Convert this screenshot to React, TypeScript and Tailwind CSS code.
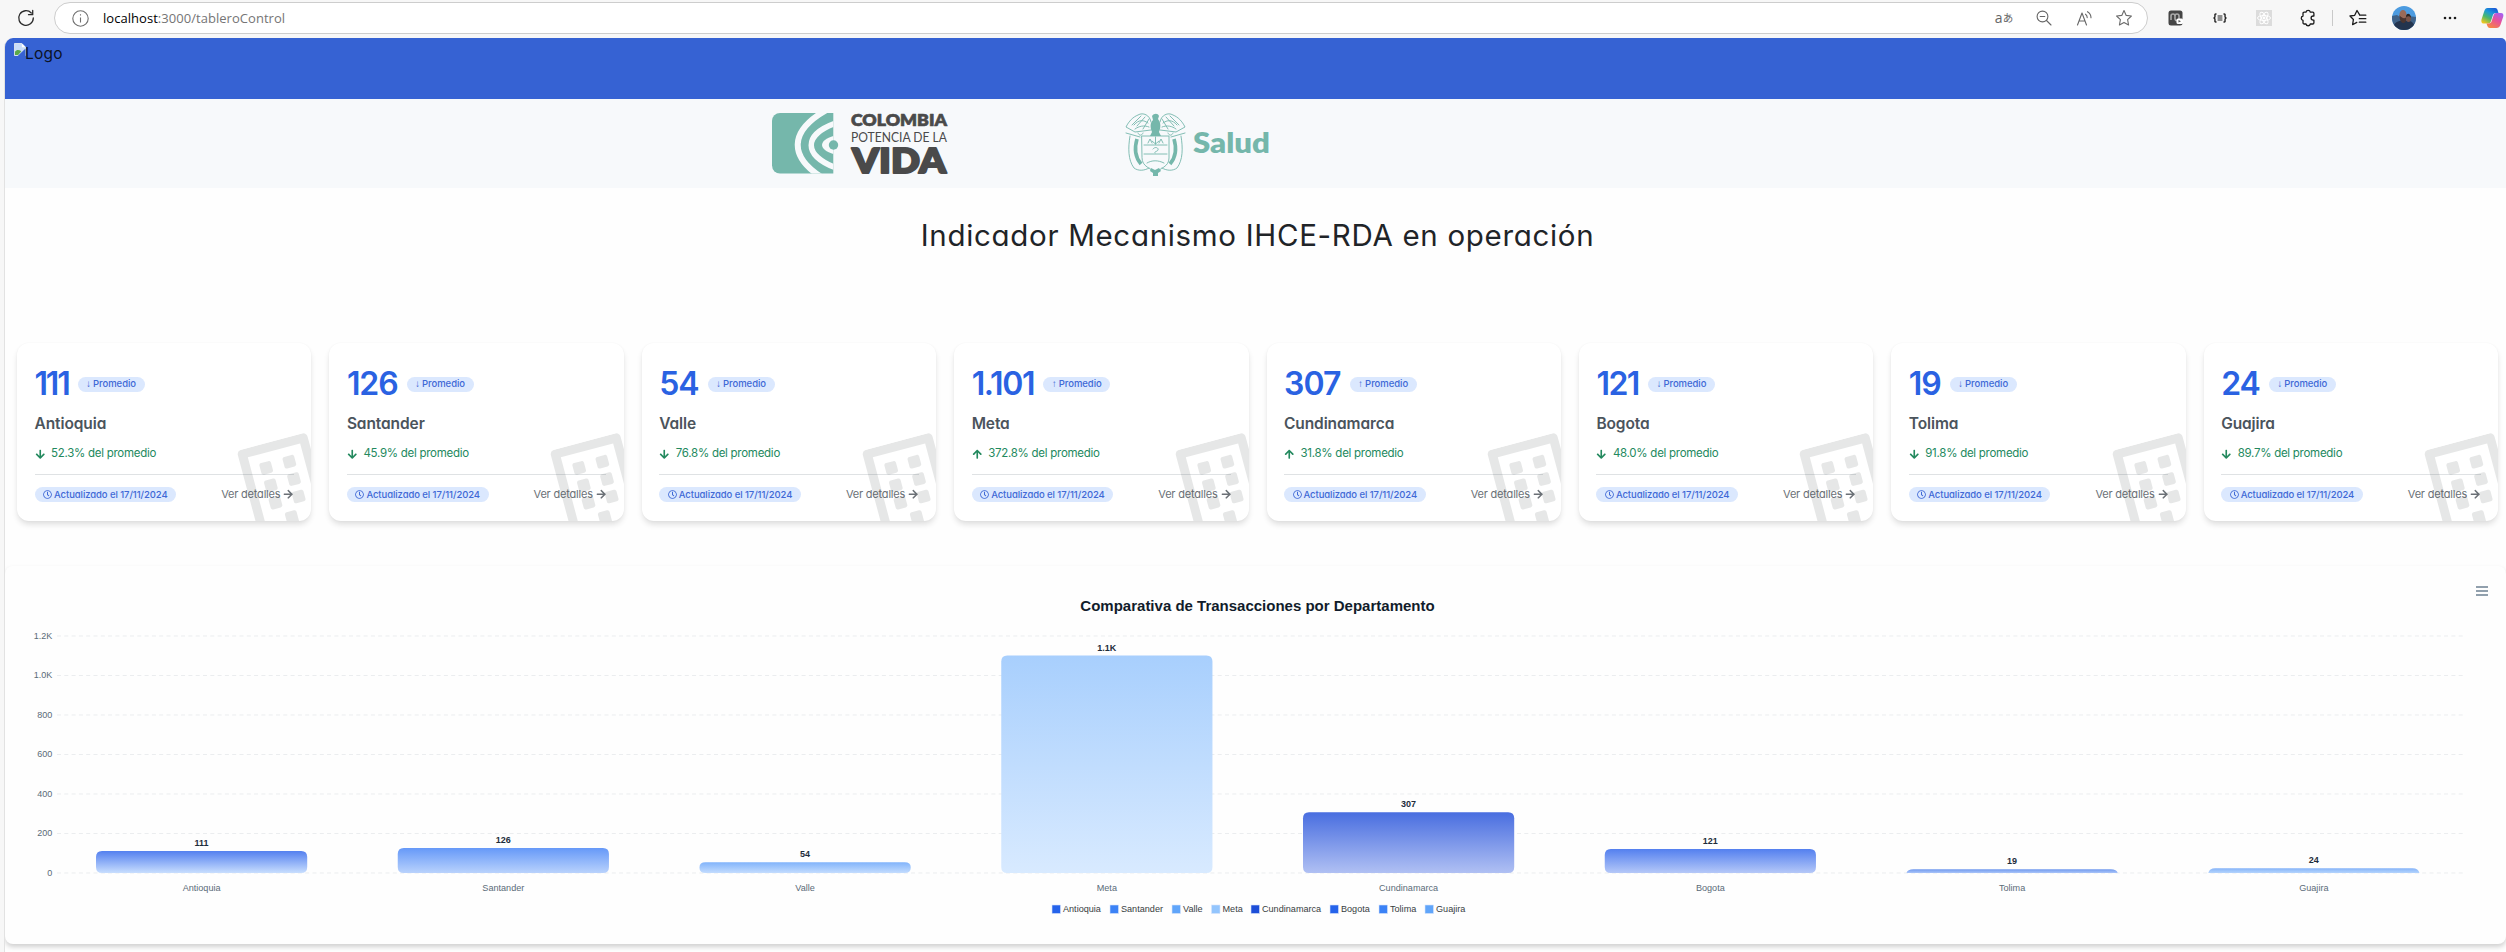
import React from "react";
import { FaRegBuilding, FaArrowUp, FaArrowDown, FaArrowRight, FaRegClock } from "react-icons/fa";

type Dept = {
  name: string;
  value: number;
  label: string;
  short: string;
  pct: string;
  up: boolean;
  tracking: string;
  top: string;
  bottom: string;
  legend: string;
  legendX: number;
};

const DEPTS: Dept[] = [
  { name: "Antioquia", value: 111, label: "111", short: "111", pct: "52.3%", up: false, tracking: "tracking-[-2.2px]", top: "#5480ef", bottom: "#c8defe", legend: "#2563eb", legendX: 1051.5 },
  { name: "Santander", value: 126, label: "126", short: "126", pct: "45.9%", up: false, tracking: "tracking-[-1.1px]", top: "#6699f8", bottom: "#b9d2fc", legend: "#3b82f6", legendX: 1109.5 },
  { name: "Valle", value: 54, label: "54", short: "54", pct: "76.8%", up: false, tracking: "tracking-[-1.1px]", top: "#82b4fb", bottom: "#c3dcfe", legend: "#60a5fa", legendX: 1171.5 },
  { name: "Meta", value: 1101, label: "1.101", short: "1.1K", pct: "372.8%", up: true, tracking: "tracking-[-1.3px]", top: "#a8cffd", bottom: "#d8eaff", legend: "#93c5fd", legendX: 1211 },
  { name: "Cundinamarca", value: 307, label: "307", short: "307", pct: "31.8%", up: true, tracking: "tracking-[-0.9px]", top: "#496ee0", bottom: "#b0c0f3", legend: "#1d4ed8", legendX: 1250.5 },
  { name: "Bogota", value: 121, label: "121", short: "121", pct: "48.0%", up: false, tracking: "tracking-[-1.5px]", top: "#5480ef", bottom: "#b5c8f8", legend: "#2563eb", legendX: 1329.5 },
  { name: "Tolima", value: 19, label: "19", short: "19", pct: "91.8%", up: false, tracking: "tracking-[-1.1px]", top: "#7099ee", bottom: "#a9c4f9", legend: "#3b82f6", legendX: 1378.5 },
  { name: "Guajira", value: 24, label: "24", short: "24", pct: "89.7%", up: false, tracking: "tracking-[-1.1px]", top: "#86b4f9", bottom: "#b4d4fd", legend: "#60a5fa", legendX: 1424.5 },
];

function Star({ list = false }: { list?: boolean }) {
  return list ? (
    <svg width="18" height="18" viewBox="0 0 18 18" fill="none" stroke="#1b1b1b" strokeWidth="1.3" strokeLinejoin="round" strokeLinecap="round">
      <path d="M10.8 6.2 8 1.5 5.7 6.3 1 7l3.4 3.5-.8 5.2 4.2-2.3M10.8 6.2h6M10.3 9.7h6.5M10.3 13.2h6.5" />
    </svg>
  ) : (
    <svg width="18" height="18" viewBox="0 0 18 18" fill="none" stroke="#6b6b6b" strokeWidth="1.1" strokeLinejoin="round">
      <path d="m9 1.6 2.2 4.8 5.2.6-3.8 3.7 1 5.3L9 13.4 4.4 16l1-5.3L1.6 7l5.2-.6z" />
    </svg>
  );
}

function BrowserBar() {
  return (
    <div className="flex h-[38px] w-full items-center bg-[#f7f7f7] pb-[2px]">
      <div className="flex w-[54px] shrink-0 justify-center pr-[2px]">
        <svg width="18" height="18" viewBox="0 0 18 18" fill="none" stroke="#2b2b2b" strokeWidth="1.3" strokeLinecap="round" strokeLinejoin="round">
          <path d="M16.3 9A7.3 7.3 0 1 1 14.3 4M15.7 1.5v4.200h-4.200" />
        </svg>
      </div>
      <div className="flex h-[32px] w-[2094px] shrink-0 items-center rounded-full border border-[#cdcdcd] bg-white pl-[17px]">
        <svg width="17" height="17" viewBox="0 0 17 17" fill="none" stroke="#6f6f6f" strokeWidth="1.1">
          <circle cx="8.5" cy="8.5" r="7.700" />
          <path d="M8.500 7.500v5M8.500 4.300v1.300" />
        </svg>
        <p className="ml-[14px] whitespace-nowrap font-['Open_Sans','Noto_Sans',sans-serif] text-[13px] leading-none tracking-[0.04px] text-[#757575]">
          <span className="text-black">localhost</span>:3000/tableroControl
        </p>
        <div className="ml-auto flex items-center pr-[3px]">
          <span className="flex w-[40px] justify-center font-['Open_Sans','Noto_Sans_CJK_JP',sans-serif] text-[14px] leading-none text-[#666]">
            a<span className="text-[10.5px] leading-[14px]">あ</span>
          </span>
          <span className="flex w-[40px] justify-center">
            <svg width="16" height="16" viewBox="0 0 16 16" fill="none" stroke="#666" strokeWidth="1.1" strokeLinecap="round">
              <circle cx="6.500" cy="6.500" r="5.400" />
              <path d="M10.500 10.500 15 15M4.200 6.500h4.600" />
            </svg>
          </span>
          <span className="flex w-[40px] justify-center">
            <svg width="17" height="17" viewBox="0 0 17 17" fill="none" stroke="#666" strokeWidth="1.1" strokeLinecap="round" strokeLinejoin="round">
              <path d="M1.500 15 6 3l4.500 12M3 11h6M9.500 4.200a4 4 0 0 1 1.700 3.400M11.500 1.700a7 7 0 0 1 3.500 6" />
            </svg>
          </span>
          <span className="flex w-[40px] justify-center">
            <Star />
          </span>
        </div>
      </div>
      <div className="ml-[6px] flex shrink-0 items-center">
        <span className="flex w-[44px] justify-center">
          <svg width="16" height="16" viewBox="0 0 16 16">
            <rect x="0.500" y="0.500" width="14" height="15" rx="2.500" fill="#454545" />
            <path d="M3 10V6a2 2 0 0 1 4 0v3a2 2 0 0 0 4-1V6a2 2 0 0 0-4 0" fill="none" stroke="#a9a9a9" strokeWidth="1.600" />
            <rect x="8.500" y="8.500" width="6.500" height="5.500" rx="1.500" fill="#fff" />
            <path d="m10.500 10 2.500 1.200-2.500 1.300z" fill="#555" />
          </svg>
        </span>
        <span className="flex w-[44px] justify-center">
          <svg width="14" height="12" viewBox="0 0 14 12" fill="none" stroke="#222" strokeWidth="1.400" strokeLinecap="round" strokeLinejoin="round">
            <path d="M3 2c-1.500 0-1 1-1 2.200C2 5.500 1 6 1 6s1 .5 1 1.800c0 1.200-.5 2.200 1 2.200M11 2c1.500 0 1 1 1 2.200C12 5.500 13 6 13 6s-1 .5-1 1.800c0 1.200.5 2.200-1 2.200" />
            <path d="M5 4h4M5 6h4M5 8h4" strokeWidth="1" />
          </svg>
        </span>
        <span className="flex w-[44px] justify-center">
          <svg width="16" height="16" viewBox="0 0 16 16">
            <rect width="16" height="16" fill="#dcdcdc" />
            <g fill="none" stroke="#fff" strokeWidth="1">
              <ellipse cx="8" cy="8" rx="6.500" ry="2.500" />
              <ellipse cx="8" cy="8" rx="6.500" ry="2.500" transform="rotate(60 8 8)" />
              <ellipse cx="8" cy="8" rx="6.500" ry="2.500" transform="rotate(120 8 8)" />
            </g>
            <circle cx="8" cy="8" r="1.400" fill="#fff" />
          </svg>
        </span>
        <span className="flex w-[44px] justify-center">
          <svg width="18" height="18" viewBox="0 0 18 18" fill="none" stroke="#1b1b1b" strokeWidth="1.300" strokeLinejoin="round">
            <path d="M7 3.200a2.200 2.200 0 0 1 4.300 0h2.400a1.200 1.200 0 0 1 1.200 1.200v2.600h-.7a2.100 2.100 0 0 0 0 4.200h.7v2.600a1.200 1.200 0 0 1-1.200 1.200h-2.400a2.200 2.200 0 0 1-4.300 0H5.200A1.200 1.200 0 0 1 4 13.800v-2.500a2.200 2.200 0 0 1 0-4.300V4.400a1.200 1.200 0 0 1 1.200-1.200z" />
          </svg>
        </span>
        <span className="ml-[2px] h-4 w-px bg-[#c9c9c9]" />
        <span className="ml-[3px] flex w-[44px] justify-center">
          <Star list />
        </span>
        <span className="flex w-[48px] justify-center">
          <svg width="24" height="24" viewBox="0 0 24 24">
            <clipPath id="av"><circle cx="12" cy="12" r="12" /></clipPath>
            <g clipPath="url(#av)">
              <rect width="24" height="24" fill="#4c9be0" />
              <path d="M0 10l5-1 3 2 8-1 8 1v13H0z" fill="#3f6288" />
              <path d="M1 24c0-7 4-9 8-9h8c3 0 6 3 6 9z" fill="#23344e" />
              <ellipse cx="11" cy="9" rx="3.600" ry="5" fill="#9a6a58" />
              <path d="M7.500 9c0 6 2 8 4 8s3.500-3 3.500-7c-1 3-5 3-7.500-1z" fill="#4b3530" />
              <ellipse cx="16.500" cy="12.500" rx="2.400" ry="3.400" fill="#7a5348" />
              <path d="M14 11c0-5 5-4 5 1-1-2-3-2-5-1z" fill="#2d2422" />
            </g>
          </svg>
        </span>
        <span className="flex w-[44px] justify-center">
          <svg width="14" height="4" viewBox="0 0 14 4" fill="#1b1b1b">
            <circle cx="2" cy="2" r="1.300" /><circle cx="7" cy="2" r="1.300" /><circle cx="12" cy="2" r="1.300" />
          </svg>
        </span>
        <span className="ml-[9px] flex">
          <svg width="23" height="20" viewBox="0 0 23 20">
            <defs>
              <linearGradient id="cpa" x1="0.800" y1="0" x2="0.200" y2="1">
                <stop offset="0" stopColor="#1a56d6" /><stop offset="0.350" stopColor="#1b9ad9" /><stop offset="0.650" stopColor="#4cb86a" /><stop offset="1" stopColor="#f0c61d" />
              </linearGradient>
              <linearGradient id="cpb" x1="0.800" y1="0" x2="0.200" y2="1">
                <stop offset="0" stopColor="#a85ff0" /><stop offset="0.450" stopColor="#e8519a" /><stop offset="1" stopColor="#f7883f" />
              </linearGradient>
            </defs>
            <path d="M6.500 0H14c2 0 2.500 1.500 3 3.500l.5 1.500h-2.500c-2 0-2.800 1-3.300 2.700L10 13c-.5 1.500-1 2.500-3 2.500H2.500C.5 15.500 0 13.500.500 11.500L3.300 3C4 1 4.800 0 6.500 0z" fill="url(#cpa)" />
            <path d="M15.500 20H9c-2 0-2.500-1.500-3-3l-.5-1.500h2c2 0 2.800-1 3.300-2.700L12.500 7.500c.5-1.500 1-2.500 3-2.500H20c2 0 2.800 1.700 2.200 3.700L19.400 17c-.7 2-2 3-3.900 3z" fill="url(#cpb)" />
          </svg>
        </span>
      </div>
    </div>
  );
}

function ColombiaLogo() {
  return (
    <svg width="180" height="85" viewBox="772 101 180 85">
      <clipPath id="emb"><path d="M780 113h53.300v60.500H780a8 8 0 0 1-8-8V121a8 8 0 0 1 8-8z" /></clipPath>
      <g clipPath="url(#emb)">
        <rect x="772" y="113" width="67" height="61" fill="#75b7ab" />
        <g fill="none" stroke="#f7f9fb">
          <path d="M832 107C787 130 787 158 828 181" strokeWidth="6" />
          <path d="M839 122C802 134 802 156 839 169" strokeWidth="5.500" />
        </g>
        <path d="M835 135.500c-17.300 4.500-17.300 14.500 0 19z" fill="#f7f9fb" />
      </g>
      <circle cx="833.500" cy="145" r="4.700" fill="#75b7ab" />
      <g fill="#4a4a4a" stroke="#4a4a4a" strokeLinejoin="round" fontFamily="Lato, 'Open Sans', sans-serif">
        <text x="851" y="126.300" fontSize="17" fontWeight="800" strokeWidth="0.600" textLength="96" lengthAdjust="spacingAndGlyphs">COLOMBIA</text>
        <text x="851" y="142" fontSize="12.500" fontWeight="400" stroke="none" textLength="96" lengthAdjust="spacingAndGlyphs">POTENCIA DE LA</text>
        <text x="852" y="172.500" fontSize="34.500" fontWeight="800" strokeWidth="1.800" textLength="94" lengthAdjust="spacingAndGlyphs">VIDA</text>
      </g>
    </svg>
  );
}

function SaludLogo() {
  return (
    <svg width="150" height="85" viewBox="1125 101 150 85">
      <g fill="none" stroke="#75b7ab" strokeWidth="0.900" strokeLinejoin="round" strokeLinecap="round">
        {/* wings */}
        <path d="M1151 122c-1-7-8-10-13-7-5 2-9 6-12 12l9 5 16-2M1160 122c1-7 8-10 13-7 5 2 9 6 12 12l-9 5-16-2" />
        <path d="M1148 123c-4-3-9-4-14 2M1149 127c-5-2-10-1-14 2M1163 123c4-3 9-4 14 2M1162 127c5-2 10-1 14 2M1145 117l-8 9M1141 116l-9 9M1149 119l-6 10M1166 117l8 9M1170 116l9 9M1162 119l6 10" />
        {/* shield and flags */}
        <path d="M1126 133l14 4M1185 133l-14 4M1142 136h27v22c0 9-9 10-13.500 15-4.500-5-13.500-6-13.500-15z" />
        <path d="M1144 145h23M1144 154h23M1130 136c-2 12-2 24 4 32 4 3 10 3 15 0M1181 136c2 12 2 24-4 32-4 3-10 3-15 0" />
        <path d="M1148 143l2-4 2 4M1159 143l2-4 2 4M1155.500 137v7M1152 141l3.500 3 3.500-3M1153 149c2-3 6-1 5 1-1 2-4 1-3 3M1147 163c5-3 11-3 17 0" />
        <path d="M1138 133c1 3 4 3 5 0M1168 133c1 3 4 3 5 0" />
        <path d="M1137 139c-3 10-2 18 4 25M1174 139c3 10 2 18-4 25" strokeWidth="3.600" strokeLinecap="butt" />
      </g>
      <path d="M1152 116c2-3 6-3 7 0l-1 3c3 4 3 8 1 13l2 4h-11l2-4c-2-5-2-9 1-12z" fill="#75b7ab" />
      <path d="M1151 168l4 2 4-2 2 3-3 2v3h-5v-3l-3-2z" fill="#75b7ab" />
      <text x="1193" y="152.500" fontSize="28.500" fontWeight="800" fill="#75b7ab" fontFamily="Lato, 'Open Sans', sans-serif" textLength="77" lengthAdjust="spacingAndGlyphs">Salud</text>
    </svg>
  );
}

function Card({ d }: { d: Dept }) {
  const Arrow = d.up ? FaArrowUp : FaArrowDown;
  return (
    <article className="relative h-[178px] overflow-hidden rounded-[12px] bg-white px-[17.500px] pt-[21px] shadow-[0_4px_6px_-1px_rgba(0,0,0,0.14),0_0_2px_rgba(0,0,0,0.04)]">
      <div className="flex h-[40px] items-center">
        <span className={"text-[32px] font-semibold leading-none text-[#2a62e2] " + d.tracking}>{d.label}</span>
        <span className="ml-[9px] flex h-[15px] items-center rounded-full bg-[#dbe8fe] px-[8.500px] text-[9.500px] font-medium leading-none text-[#4069d6]">
          <span className="mr-[2px] font-['Liberation_Sans',Arial,sans-serif] text-[10px]">{d.up ? "↑" : "↓"}</span>
          <span className="tracking-[-0.040px]">Promedio</span>
        </span>
      </div>
      <h3 className="mt-[9px] text-[15.500px] font-semibold leading-[22px] tracking-[-0.100px] text-[#4b545c]">{d.name}</h3>
      <p className="mt-[10px] flex h-[18px] items-center text-[11.500px] leading-none tracking-[-0.270px] text-[#23895e]">
        <Arrow className="mr-[6px] size-[10.500px]" />
        {d.pct} del promedio
      </p>
      <div className="mt-[11px] border-t border-[#dfe2e4]" />
      <div className="mt-[12px] flex h-[15px] items-center justify-between">
        <span className="flex h-[15px] items-center whitespace-nowrap rounded-full bg-[#dbe8fe] px-[8.500px] text-[9.500px] font-medium leading-none tracking-[-0.080px] text-[#4069d6]">
          <FaRegClock className="mr-[2px] size-[9px]" />
          Actualizado el 17/11/2024
        </span>
        <span className="flex items-center whitespace-nowrap text-[11px] leading-none tracking-[-0.200px] text-[#6b7177]">
          Ver detalles
          <FaArrowRight className="ml-[3px] size-[10.500px]" />
        </span>
      </div>
      <FaRegBuilding className="absolute bottom-[-15px] right-[-21px] size-[96px] -rotate-[15deg] text-[#212a29] opacity-[0.110]" />
    </article>
  );
}

function Chart() {
  const base = 307;
  const unit = 0.1975;
  const ticks = ["0", "200", "400", "600", "800", "1.0K", "1.2K"];
  return (
    <svg width="2501" height="378" viewBox="5 0 2501 378" fontFamily="'Liberation Sans', Arial, sans-serif">
      <defs>
        {DEPTS.map((d, i) => (
          <linearGradient key={d.name} id={"bar" + i} x1="0" y1="0" x2="0" y2="1">
            <stop offset="0" stopColor={d.top} />
            <stop offset="1" stopColor={d.bottom} />
          </linearGradient>
        ))}
      </defs>
      <text x="1257.500" y="45" textAnchor="middle" fontSize="15" fontWeight="700" fill="#111c2b">Comparativa de Transacciones por Departamento</text>
      <path d="M2476 21h12M2476 25h12M2476 29h12" stroke="#6e8192" strokeWidth="1.300" />
      {ticks.map((t, i) => (
        <g key={t}>
          <path d={"M57 " + (base - i * 39.5) + "H2465"} stroke="#ebedef" strokeWidth="1" strokeDasharray="4 3.300" />
          <text x="52.300" y={base + 2.8 - i * 39.5} textAnchor="end" fontSize="9" fill="#5a6b78">{t}</text>
        </g>
      ))}
      {DEPTS.map((d, i) => {
        const cx = 201.6 + i * 301.75;
        const h = d.value * unit;
        const y = base - h;
        const l = cx - 105.6;
        const r = cx + 105.6;
        const path =
          h > 14
            ? `M${l} ${y + 6}q0-6 6-6H${r - 6}q6 0 6 6V${base - 6}q0 6-6 6H${l + 6}q-6 0-6-6z`
            : h > 8
              ? `M${l} ${y + 5}q0-5 6-5H${r - 6}q6 0 6 5V${base - 5}q0 5-6 5H${l + 6}q-6 0-6-5z`
              : `M${l} ${base}q1-${h} 7-${h}H${r - 7}q6 0 7 ${h}z`;
        return (
          <g key={d.name}>
            <path d={path} fill={"url(#bar" + i + ")"} />
            <text x={cx} y={y - 5} textAnchor="middle" fontSize="9" fontWeight="700" fill="#1d2c3b">{d.short}</text>
            <text x={cx} y="325" textAnchor="middle" fontSize="9.100" fill="#5a6b78">{d.name}</text>
            <rect x={d.legendX + 0.5} y="339" width="8.500" height="8.500" fill={d.legend} stroke="#d7e4fb" strokeWidth="0.600" />
            <text x={d.legendX + 11.5} y="346.200" fontSize="9.100" fill="#373d3f">{d.name}</text>
          </g>
        );
      })}
    </svg>
  );
}

export default function App() {
  return (
    <div className="h-[952px] w-[2506px] overflow-hidden bg-[#f7f7f7] font-['Inter','Open_Sans',sans-serif] [font-feature-settings:'cv11']">
      <BrowserBar />
      <div className="ml-[4px] h-[914px] overflow-hidden rounded-tl-[9px] border-l border-[#e2e2e2] bg-[#fefefe]">
        <header className="flex h-[61px] items-start rounded-tr-[5px] bg-[#3662d3] pl-[9px] pt-[5px]">
          <svg width="12" height="13" viewBox="0 0 13 14">
            <path d="M.5.500h8l4 4v9H.500z" fill="#c9dcf8" stroke="#dfe6ee" />
            <path d="M8.500.500v4h4z" fill="#fff" />
            <path d="M1 13V9.500C3 7 5 7 8 9l-3.500 4z" fill="#5aa848" />
            <path d="M4 14 12.500 6v8z" fill="#3662d3" />
          </svg>
          <span className="ml-[-1px] mt-px text-[15.500px] leading-[20px] tracking-[0.200px] text-[#0b1226]">Logo</span>
        </header>
        <div className="flex h-[89px] items-start bg-[#f7f9fb] pl-[767px] pt-[2px]">
          <ColombiaLogo />
          <div className="ml-[173px]">
            <SaludLogo />
          </div>
        </div>
        <h1 className="mt-[27px] h-[41px] pl-[4px] text-center text-[29.500px] font-normal leading-[40px] tracking-[0.680px] text-[#1f2428]">
          Indicador Mecanismo IHCE-RDA en operación
        </h1>
        <section className="mt-[87px] grid w-[2493px] grid-cols-8 gap-[18px] pl-[12px]">
          {DEPTS.map((d) => (
            <Card key={d.name} d={d} />
          ))}
        </section>
        <section className="mt-[45px] h-[378px] w-[2501px] rounded-[8px] bg-[#fefefe] shadow-[0_3px_5px_rgba(0,0,0,0.18)]">
          <Chart />
        </section>
      </div>
    </div>
  );
}
